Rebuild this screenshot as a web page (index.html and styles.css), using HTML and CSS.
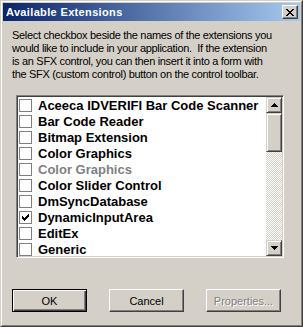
FILE: index.html
```html
<!DOCTYPE html>
<html lang="en">
<head>
  <meta charset="UTF-8">
  <title>Available Extensions</title>
  <link rel="stylesheet" href="styles.css">
</head>
<body>
  <div class="window">
    <div class="frame">
      <div class="titlebar">
        <span class="title">Available Extensions</span>
        <span class="close">
          <svg width="8" height="7" viewBox="0 0 8 7"><path d="M0 0h2v1h1v1h2v-1h1v-1h2v1h-1v1h-1v1h-1v1h1v1h1v1h1v1h-2v-1h-1v-1h-2v1h-1v1h-2v-1h1v-1h1v-1h1v-1h-1v-1h-1v-1h-1z" fill="#000"/></svg>
        </span>
      </div>

      <p class="intro">Select checkbox beside the names of the extensions you<br>would like to include in your application.&nbsp; If the extension<br>is an SFX control, you can then insert it into a form with<br>the SFX (custom control) button on the control toolbar.</p>

      <div class="listbox">
        <ul class="items">
          <li><span class="check"></span>Aceeca IDVERIFI Bar Code Scanner</li>
          <li><span class="check"></span>Bar Code Reader</li>
          <li><span class="check"></span>Bitmap Extension</li>
          <li><span class="check"></span>Color Graphics</li>
          <li class="disabled"><span class="check"></span>Color Graphics</li>
          <li><span class="check"></span>Color Slider Control</li>
          <li><span class="check"></span>DmSyncDatabase</li>
          <li><span class="check checked"><svg width="7" height="7" viewBox="0 0 7 7"><path d="M0 2h1v1h1v1h1v-1h1v-1h1v-1h1v-1h1v3h-1v1h-1v1h-1v1h-1v1h-1v-1h-1v-1h-1z" fill="#000"/></svg></span>DynamicInputArea</li>
          <li><span class="check"></span>EditEx</li>
          <li><span class="check"></span>Generic</li>
        </ul>
        <div class="scrollbar">
          <span class="sb-btn"><svg width="7" height="4" viewBox="0 0 7 4"><path d="M3 0h1v1h1v1h1v1h1v1h-7v-1h1v-1h1v-1h1z" fill="#000"/></svg></span>
          <span class="sb-thumb"></span>
          <span class="sb-track"></span>
          <span class="sb-btn"><svg width="7" height="4" viewBox="0 0 7 4"><path d="M0 0h7v1h-1v1h-1v1h-1v1h-1v-1h-1v-1h-1v-1h-1z" fill="#000"/></svg></span>
        </div>
      </div>

      <div class="buttons">
        <button class="btn default">OK</button>
        <button class="btn">Cancel</button>
        <button class="btn" disabled>Properties...</button>
      </div>
    </div>
  </div>
</body>
</html>
```

FILE: styles.css
```css
body {
  margin: 0;
  font-family: "Liberation Sans", Arial, sans-serif;
  font-size: 11px;
  color: #000;
}

.window {
  width: 303px;
  height: 327px;
  box-sizing: border-box;
  background: #d4d0c8;
  border: 1px solid;
  border-color: #d4d0c8 #404040 #404040 #d4d0c8;
}

.frame {
  height: 100%;
  box-sizing: border-box;
  border: 1px solid;
  border-color: #fff #808080 #808080 #fff;
  padding: 1px;
}

.titlebar {
  height: 18px;
  display: flex;
  align-items: center;
  justify-content: space-between;
  padding: 0 2px 0 3px;
  background: linear-gradient(90deg, #0a246a, #a6caf0);
}

.title {
  color: #fff;
  font-weight: bold;
  font-size: 11px;
  letter-spacing: 0.35px;
}

.close {
  width: 16px;
  height: 14px;
  box-sizing: border-box;
  background: #d4d0c8;
  border: 1px solid;
  border-color: #fff #404040 #404040 #fff;
  box-shadow: inset -1px -1px 0 #808080;
  display: flex;
  align-items: center;
  justify-content: center;
}

.intro {
  margin: 8px 0 0 9px;
  line-height: 13px;
  white-space: nowrap;
  letter-spacing: -0.32px;
}

.listbox {
  margin: 14px 0 0 13px;
  width: 268px;
  height: 163px;
  box-sizing: border-box;
  border: 1px solid;
  border-color: #808080 #fff #fff #808080;
  box-shadow: inset 1px 1px 0 #404040, inset -1px -1px 0 #d4d0c8;
  padding: 1px;
  background: #fff;
  display: flex;
  overflow: hidden;
}

.items {
  flex: 1;
  margin: 0;
  padding: 0;
  list-style: none;
  overflow: hidden;
}

.items li {
  height: 16px;
  display: flex;
  align-items: center;
  padding-left: 1px;
  font-family: "Liberation Sans", Arial, sans-serif;
  font-weight: bold;
  font-size: 13px;
  white-space: nowrap;
}

.items li.disabled {
  color: #808080;
}

.check {
  width: 13px;
  height: 13px;
  box-sizing: border-box;
  border: 1px solid #808080;
  background: #fff;
  margin-right: 6px;
  flex: none;
  display: flex;
  align-items: center;
  justify-content: center;
}

.scrollbar {
  width: 16px;
  flex: none;
  display: flex;
  flex-direction: column;
}

.sb-btn, .sb-thumb {
  box-sizing: border-box;
  background: #d4d0c8;
  border: 1px solid;
  border-color: #d4d0c8 #404040 #404040 #d4d0c8;
  box-shadow: inset 1px 1px 0 #fff, inset -1px -1px 0 #808080;
}

.sb-btn {
  height: 16px;
  display: flex;
  align-items: center;
  justify-content: center;
}

.sb-thumb {
  height: 39px;
}

.sb-track {
  flex: 1;
  background: repeating-conic-gradient(#d4d0c8 0 25%, #fff 0 50%) 0 0 / 2px 2px;
}

.buttons {
  display: flex;
  gap: 22px;
  margin: 31px 0 0 9px;
}

.btn {
  width: 75px;
  height: 23px;
  box-sizing: border-box;
  font-family: "Liberation Sans", Arial, sans-serif;
  font-size: 11px;
  color: #000;
  background: #d4d0c8;
  border: 1px solid;
  border-color: #fff #404040 #404040 #fff;
  box-shadow: inset -1px -1px 0 #808080;
  padding: 0;
}

.btn.default {
  border: 1px solid #000;
  box-shadow: inset 1px 1px 0 #fff, inset -1px -1px 0 #404040, inset -2px -2px 0 #808080;
}

.btn:disabled {
  color: #808080;
  text-shadow: 1px 1px 0 #fff;
}
```
